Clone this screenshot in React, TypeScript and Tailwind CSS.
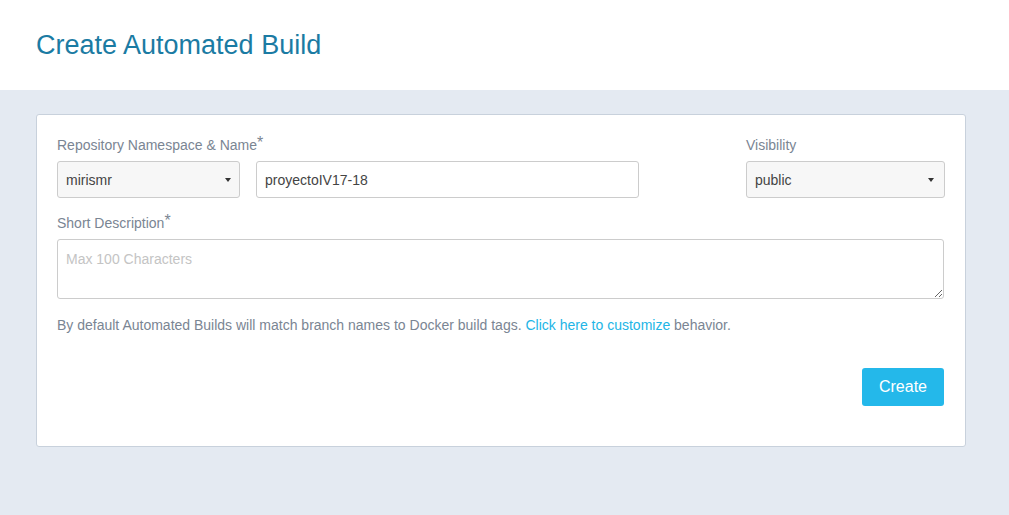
export default function App() {
  return (
    <div className="min-h-screen bg-[#e4eaf2]" style={{ fontFamily: '"Liberation Sans", Arial, sans-serif' }}>
      {/* Header */}
      <div className="h-[90px] bg-white px-9 flex items-center">
        <h1 className="text-[27px] text-[#1b7ba3] leading-none">Create Automated Build</h1>
      </div>

      {/* Card */}
      <div className="px-9 pt-6">
        <div className="w-[930px] bg-white border border-[#c8d1dc] rounded-[3px] pl-5 pr-[21px] pt-5 pb-10">
          <div className="flex">
            <div className="flex flex-col">
              <label className="text-sm leading-5 text-[#7a8593] mb-[6px]">
                Repository Namespace &amp; Name<span className="text-base align-top leading-4">*</span>
              </label>
              <div className="flex gap-4">
                <div className="w-[183px] h-[37px] border border-[#cccccc] rounded-[3px] bg-[#f7f7f7] flex items-center justify-between pl-2 pr-[8px]">
                  <span className="text-sm text-[#444]">mirismr</span>
                  <span className="w-0 h-0 border-l-[3px] border-r-[3px] border-t-[4px] border-l-transparent border-r-transparent border-t-[#333]" />
                </div>
                <div className="w-[383px] h-[37px] border border-[#cccccc] rounded-[3px] bg-white flex items-center pl-2">
                  <span className="text-sm text-[#444]">proyectoIV17-18</span>
                </div>
              </div>
            </div>
            <div className="flex flex-col ml-[107px]">
              <label className="text-sm leading-5 text-[#7a8593] mb-[6px]">Visibility</label>
              <div className="w-[199px] h-[37px] border border-[#cccccc] rounded-[3px] bg-[#f7f7f7] flex items-center justify-between pl-2 pr-[10px]">
                <span className="text-sm text-[#444]">public</span>
                <span className="w-0 h-0 border-l-[3px] border-r-[3px] border-t-[4px] border-l-transparent border-r-transparent border-t-[#333]" />
              </div>
            </div>
          </div>

          <label className="block mt-[15px] text-sm leading-5 text-[#7a8593] mb-[6px]">
            Short Description<span className="text-base align-top leading-4">*</span>
          </label>
          <textarea
            placeholder="Max 100 Characters"
            className="block w-full h-[60px] border border-[#cccccc] rounded-[3px] px-2 pt-[9px] text-sm text-[#444] placeholder:text-[#c4c4c4] outline-none"
          />

          <p className="mt-4 text-sm leading-5 text-[#7a8593]">
            By default Automated Builds will match branch names to Docker build tags.{" "}
            <a className="text-[#22b5e6]">Click here to customize</a> behavior.
          </p>

          <div className="flex justify-end mt-[33px]">
            <button className="w-[82px] h-[38px] rounded-[3px] bg-[#24b8ea] text-white text-base">Create</button>
          </div>
        </div>
      </div>
    </div>
  );
}
